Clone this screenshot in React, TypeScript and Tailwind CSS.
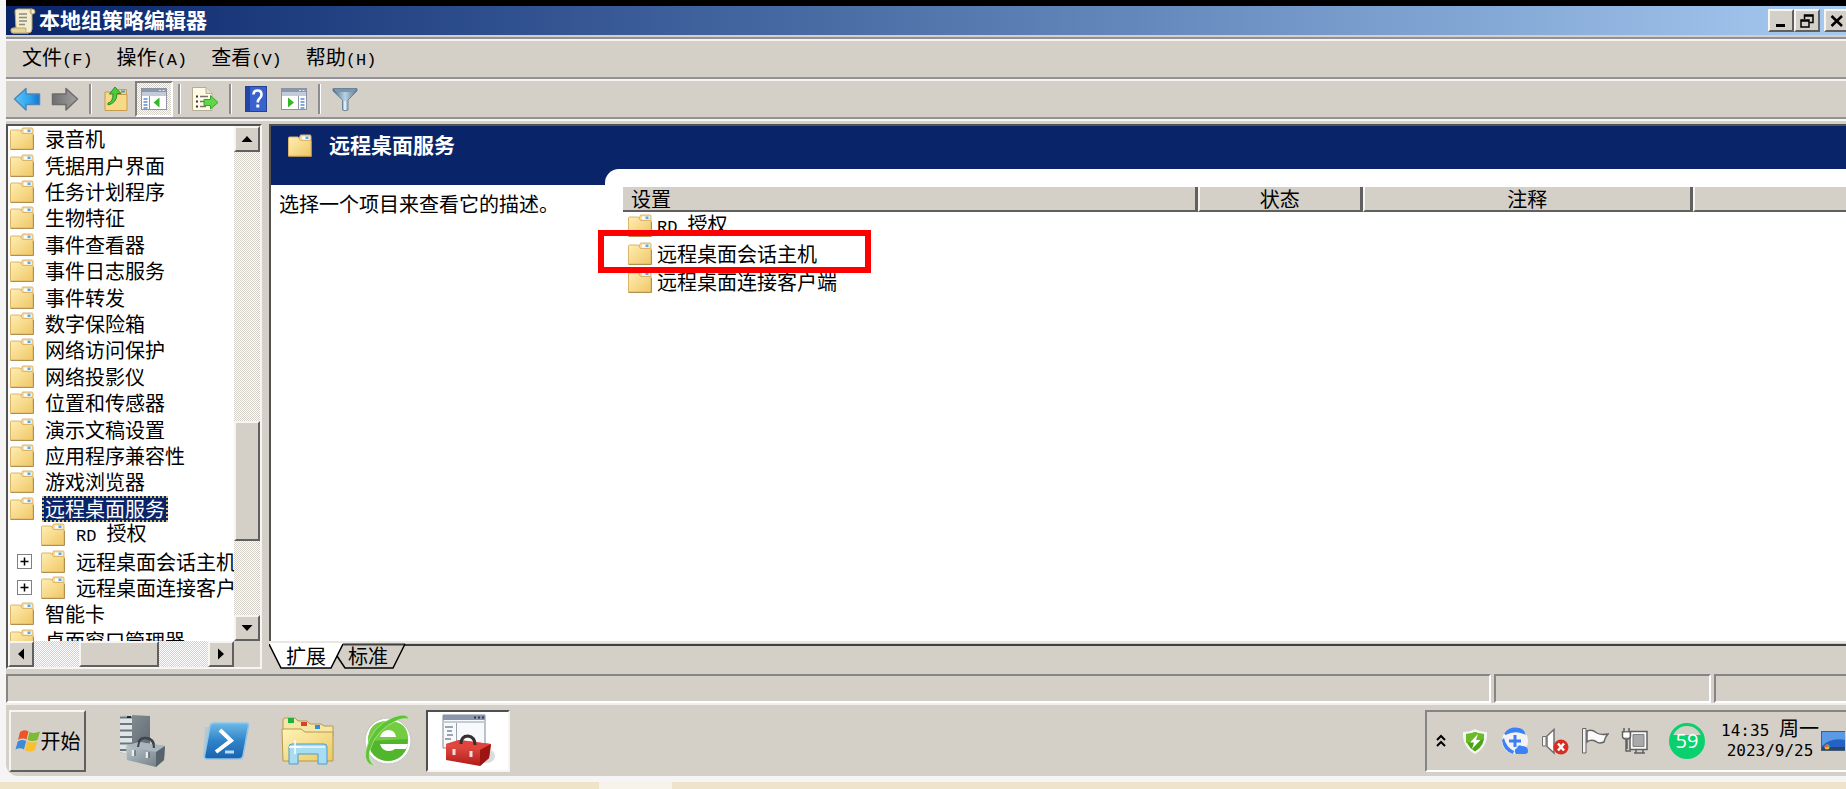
import type { ReactNode } from 'react'
import { clsx } from 'clsx'

const menus = [
  { name: '文件', key: '(F)' },
  { name: '操作', key: '(A)' },
  { name: '查看', key: '(V)' },
  { name: '帮助', key: '(H)' },
]

type TreeItem = { name: string; latin?: string; child?: boolean; expandable?: boolean; selected?: boolean }

const tree: TreeItem[] = [
  { name: '录音机' },
  { name: '凭据用户界面' },
  { name: '任务计划程序' },
  { name: '生物特征' },
  { name: '事件查看器' },
  { name: '事件日志服务' },
  { name: '事件转发' },
  { name: '数字保险箱' },
  { name: '网络访问保护' },
  { name: '网络投影仪' },
  { name: '位置和传感器' },
  { name: '演示文稿设置' },
  { name: '应用程序兼容性' },
  { name: '游戏浏览器' },
  { name: '远程桌面服务', selected: true },
  { name: '授权', latin: 'RD ', child: true },
  { name: '远程桌面会话主机', child: true, expandable: true },
  { name: '远程桌面连接客户端', child: true, expandable: true },
  { name: '智能卡' },
  { name: '桌面窗口管理器' },
]

const settings = [
  { name: '授权', latin: 'RD ' },
  { name: '远程桌面会话主机', marked: true },
  { name: '远程桌面连接客户端' },
]

const raised = 'bg-[#d4d0c8] border-2 border-t-[#f6f5f2] border-l-[#f6f5f2] border-r-[#606060] border-b-[#606060]'
const track = 'bg-[repeating-conic-gradient(#ffffff_0_25%,#d4d0c8_0_50%)] bg-[length:2px_2px]'

function Latin({ children }: { children: ReactNode }) {
  return <span className="font-['Liberation_Mono'] text-[17px] whitespace-pre">{children}</span>
}

function FolderIcon() {
  return (
    <svg viewBox="0 0 24 24" className="size-6 shrink-0" aria-hidden="true">
      <defs>
        <linearGradient id="folder" x1="0" y1="0" x2="1" y2="1">
          <stop offset="0" stopColor="#ffeeb4" />
          <stop offset="1" stopColor="#efc765" />
        </linearGradient>
      </defs>
      <path d="M11 4.5L12.5 1H22Q23 1 23 2.500V10H11Z" fill="#f6dc9c" stroke="#e0b56c" />
      <rect x="14" y="2.500" width="7.500" height="3" fill="#fff" />
      <rect x="17.500" y="2.500" width="3" height="2.500" fill="#55aaf0" />
      <path d="M.5 4Q.5 3 1.500 3H10L12.500 6.500H22.500Q23 6.500 23 7.500V22H.5Z" fill="url(#folder)" stroke="#dcb566" />
      <path d="M.5 22.500H23.500V8" fill="none" stroke="#b08f50" />
    </svg>
  )
}

function Arrow({ dir }: { dir: 'up' | 'down' | 'left' | 'right' }) {
  const paths = {
    up: 'M6 3L11.5 9H0.5Z',
    down: 'M6 9L11.5 3H0.5Z',
    left: 'M3 6L9 0.5V11.5Z',
    right: 'M9 6L3 0.5V11.5Z',
  }
  return (
    <svg viewBox="0 0 12 12" className="size-3" aria-hidden="true">
      <path d={paths[dir]} fill="#000" />
    </svg>
  )
}

function ScrollButton({ dir, label }: { dir: 'up' | 'down' | 'left' | 'right'; label: string }) {
  return (
    <button type="button" aria-label={label} className={clsx(raised, 'flex size-[26px] shrink-0 items-center justify-center')}>
      <Arrow dir={dir} />
    </button>
  )
}

function Groove() {
  return <div className="h-1 shrink-0 border-t-2 border-b-2 border-t-[#929196] border-b-[#f6f5f2]" />
}

function ToolButton({ label, pressed, children }: { label: string; pressed?: boolean; children: ReactNode }) {
  return (
    <button
      type="button"
      aria-label={label}
      className={clsx(
        'flex h-9 w-[38px] items-center justify-center',
        pressed && 'border-2 border-t-[#808080] border-l-[#808080] border-r-white border-b-white',
        pressed && track,
      )}
    >
      {children}
    </button>
  )
}

function ToolSeparator() {
  return (
    <div className="flex w-[13px] justify-center">
      <div className="h-[30px] w-[3px] border-l-2 border-r border-l-[#8d8d91] border-r-white" />
    </div>
  )
}

function ArrowToolIcon({ back }: { back?: boolean }) {
  return (
    <svg viewBox="0 0 28 26" className="h-[26px] w-7" aria-hidden="true">
      <defs>
        <linearGradient id="blueArrow" x1="0" y1="0" x2="1" y2="0">
          <stop offset="0" stopColor="#5cc6f8" />
          <stop offset=".6" stopColor="#2da4ee" />
          <stop offset="1" stopColor="#1673c8" />
        </linearGradient>
        <linearGradient id="grayArrow" x1="0" y1="0" x2="1" y2="0">
          <stop offset="0" stopColor="#6e6e6e" />
          <stop offset="1" stopColor="#a2a2a2" />
        </linearGradient>
      </defs>
      {back ? (
        <path d="M1.5 13L13 2.5V8H26.5V18.5H13V24Z" fill="url(#blueArrow)" stroke="#4b87bd" strokeWidth="1.5" strokeLinejoin="round" />
      ) : (
        <path d="M26.5 13L15 2.5V8H1.5V18.5H15V24Z" fill="url(#grayArrow)" stroke="#6c6c6c" strokeWidth="1.5" strokeLinejoin="round" />
      )}
    </svg>
  )
}

function FolderUpIcon() {
  return (
    <svg viewBox="0 0 24 26" className="h-[26px] w-6" aria-hidden="true">
      <path d="M13 6L14.5 3.5H22.5V12H13Z" fill="#f3d488" stroke="#c9a050" />
      <rect x="17" y="4.5" width="4" height="2" fill="#3a9be8" />
      <path d="M1 6H11L13 8.5H23V24.5H1Z" fill="#f7d988" stroke="#c69c4a" />
      <path d="M4 17Q9 16 9 8H5.5L11 1L17 7.5H13Q13 17 4 19Z" fill="#4ccb3b" stroke="#2d8f2a" />
    </svg>
  )
}

function PaneIcon({ flip }: { flip?: boolean }) {
  return (
    <svg viewBox="0 0 26 22" className="h-[22px] w-[26px]" aria-hidden="true">
      <rect x=".5" y=".5" width="25" height="21" fill="#fff" stroke="#8b93a5" />
      <rect x="1" y="1" width="24" height="3" fill="#8b97ad" />
      <path d="M18 2.5H20M21.5 2.5H23.5" stroke="#dfe5ee" />
      <rect x="1" y="4" width="24" height="4" fill="#c3cbd8" />
      {flip ? (
        <>
          <path d="M17.5 8V21" stroke="#8b93a5" />
          <path d="M19.5 11H23.5M19.5 14H23.5M19.5 17H23.5M19.5 20H23.5" stroke="#5b8ccc" strokeWidth="1.5" />
          <path d="M7 9.5L13 14.5L7 19.5Z" fill="#35b52c" />
        </>
      ) : (
        <>
          <path d="M8.5 8V21" stroke="#8b93a5" />
          <path d="M2.5 11H6.5M2.5 14H6.5M2.5 17H6.5M2.5 20H6.5" stroke="#5b8ccc" strokeWidth="1.5" />
          <path d="M18.5 9.5L12.5 14.5L18.5 19.5Z" fill="#35b52c" />
        </>
      )}
    </svg>
  )
}

function ExportIcon() {
  return (
    <svg viewBox="0 0 28 26" className="h-[26px] w-7" aria-hidden="true">
      <path d="M1.5 1.5H15L21 7.5V24.5H1.5Z" fill="#fdfae6" stroke="#b7ad92" />
      <path d="M15 1.5V7.5H21" fill="#e6dfc6" stroke="#b7ad92" />
      <path d="M5 10.5H7M5 15.5H7M5 20.5H7" stroke="#333" strokeWidth="2" />
      <path d="M9 10.5H17M9 15.5H14M9 20.5H15" stroke="#77736a" strokeWidth="1.5" />
      <path d="M13 13.5H19.5V9.5L27 16.5L19.5 23V19.5H13Z" fill="#5fd848" stroke="#39a52f" />
    </svg>
  )
}

function HelpIcon() {
  return (
    <svg viewBox="0 0 22 26" className="h-[26px] w-[22px]" aria-hidden="true">
      <rect x=".5" y=".5" width="21" height="25" fill="#3a62cf" stroke="#27408f" />
      <rect x="1" y="1" width="4" height="24" fill="#2545a4" />
      <path d="M8.5 8.5Q8.5 4.5 12.5 4.5Q16.5 4.5 16.5 8.5Q16.5 11 14.5 12.5Q12.8 13.8 12.8 16.5" fill="none" stroke="#fff" strokeWidth="2.6" />
      <rect x="11.3" y="18.5" width="3" height="3" fill="#fff" />
    </svg>
  )
}

function FilterIcon() {
  return (
    <svg viewBox="0 0 26 26" className="size-[26px]" aria-hidden="true">
      <defs>
        <linearGradient id="funnel" x1="0" y1="0" x2="1" y2="0">
          <stop offset="0" stopColor="#4f6b82" />
          <stop offset=".5" stopColor="#b9d3e4" />
          <stop offset="1" stopColor="#58758d" />
        </linearGradient>
      </defs>
      <path d="M1 2.5H25V5L16 14V24Q13 25.5 10.5 24V14L1 5Z" fill="url(#funnel)" stroke="#6b8498" />
      <path d="M2 3H24L22 6H4Z" fill="#7b97ab" />
      <path d="M13 15V24" stroke="#dcebf5" strokeWidth="2" />
    </svg>
  )
}

function ScrollIcon() {
  return (
    <svg viewBox="0 0 26 26" className="size-[26px]" aria-hidden="true">
      <path d="M5 3Q5 1 8 1H22Q25 1 25 4Q25 6 22 6V21Q22 25 18 25H3Q1 25 1 22Q1 20 4 20H6Z" fill="#f5eccb" stroke="#bba76c" />
      <path d="M22 6Q20 6 20 3.5Q20 1 22 1" fill="#d9c88e" stroke="#bba76c" />
      <path d="M4 20H16Q15 25 18 25H3Q1 25 1 22Q1 20 4 20Z" fill="#e4d49c" stroke="#bba76c" />
      <path d="M9 6H17M9 9.5H17M9 13H17M9 16.5H15" stroke="#8a8a86" strokeWidth="1.5" />
    </svg>
  )
}

function WindowsFlag() {
  return (
    <svg viewBox="0 0 26 24" className="h-6 w-[26px]" aria-hidden="true">
      <path d="M5 3Q9 0 13.5 2.5L11.5 10.5Q7 8.5 3 11Z" fill="#e8562a" />
      <path d="M14.5 3Q19 5 25 2.5L22.5 11Q17 13 12.5 11Z" fill="#7dbb35" />
      <path d="M2.7 12.5Q7 10 11.2 12L9 20.5Q5 18 .5 20.5Z" fill="#3f8ad8" />
      <path d="M12.2 12.5Q17 14.5 22 12.5L20 21Q15 24 10 21Z" fill="#f8c02c" />
    </svg>
  )
}

function ServerIcon() {
  return (
    <svg viewBox="0 0 46 54" className="h-[54px] w-[46px]" aria-hidden="true">
      <defs>
        <linearGradient id="tower" x1="0" y1="0" x2="1" y2="1">
          <stop offset="0" stopColor="#8b959b" />
          <stop offset="1" stopColor="#5c666d" />
        </linearGradient>
        <linearGradient id="steel" x1="0" y1="0" x2="1" y2="1">
          <stop offset="0" stopColor="#c2ccd2" />
          <stop offset="1" stopColor="#697780" />
        </linearGradient>
      </defs>
      <path d="M1 2L13 1L31 2V38L13 42L1 38Z" fill="url(#tower)" />
      <path d="M1 2L13 1V42L1 38Z" fill="#dfe4e6" />
      <path d="M1 3.5H13M1 10H13M1 16.5H13M1 23H13M1 29.5H13M1 36H13" stroke="#6c767c" strokeWidth="2" />
      <path d="M8 3H12" stroke="#1e2a30" strokeWidth="2" />
      <path d="M19 31Q20 23 27 24Q35 25 35 32" fill="none" stroke="#3c464c" strokeWidth="2.5" />
      <path d="M7 32L20 28L46 32L45 46L37 53L8 46Z" fill="url(#steel)" />
      <path d="M7 32L20 28L46 32L37 38Z" fill="#aab6bd" />
      <path d="M19 33Q20 23 27 24Q35 25 35 34" fill="none" stroke="#3c464c" strokeWidth="2" />
      <path d="M37 38L46 32L45 46L37 53Z" fill="#57646c" />
      <path d="M14 36V42M28 38V44" stroke="#e8edf0" strokeWidth="2.5" />
      <path d="M16 36V42M30 38V44" stroke="#47535a" />
    </svg>
  )
}

function PowerShellIcon() {
  return (
    <svg viewBox="0 0 50 40" className="h-10 w-[50px]" aria-hidden="true">
      <defs>
        <linearGradient id="ps" x1="0" y1="0" x2="0" y2="1">
          <stop offset="0" stopColor="#6db9e6" />
          <stop offset=".5" stopColor="#2f83c9" />
          <stop offset="1" stopColor="#1a62ad" />
        </linearGradient>
      </defs>
      <path d="M4 6H10L4 36H2Z" fill="#9fc4dc" opacity=".6" />
      <path d="M13 2H45Q48 2 47.5 5L42 35Q41.5 38 38 38H6Q3 38 3.5 35L9 5Q9.5 2 13 2Z" fill="url(#ps)" stroke="#8fc6ea" strokeWidth="1.5" />
      <path d="M19 9L30 19.5L15 31" fill="none" stroke="#fff" strokeWidth="4" />
      <path d="M24 31H33" stroke="#b8dcf4" strokeWidth="3" />
    </svg>
  )
}

function ExplorerIcon() {
  return (
    <svg viewBox="0 0 54 50" className="h-[50px] w-[54px]" aria-hidden="true">
      <defs>
        <linearGradient id="files" x1="0" y1="0" x2="1" y2="1">
          <stop offset="0" stopColor="#fff3b8" />
          <stop offset="1" stopColor="#ecc963" />
        </linearGradient>
      </defs>
      <path d="M2 12V4Q2 2 4 2H14L17 5H26L29 8H40L43 10H52V20H2Z" fill="#f5e6a6" stroke="#b59a4d" />
      <rect x="7" y="2" width="6" height="5" fill="#18b53a" />
      <rect x="20" y="6" width="6" height="4" fill="#d8412b" />
      <rect x="34" y="9" width="5" height="4" fill="#2e8de6" />
      <path d="M1 13H20L24 16H52V45H2Z" fill="url(#files)" stroke="#b59a4d" />
      <path d="M8 31Q8 28 11 28H43Q46 28 46 31V48H37V38H17V48H8Z" fill="#a7dcf3" stroke="#4c9cc8" />
      <path d="M10 31H44" stroke="#dff4fd" strokeWidth="2" />
      <path d="M14 24V38M8 31H20" stroke="#fff" strokeWidth="1.5" />
    </svg>
  )
}

function BrowserIcon() {
  return (
    <svg viewBox="0 0 52 54" className="h-[54px] w-[52px]" aria-hidden="true">
      <circle cx="26" cy="27" r="23" fill="#fff" stroke="#c4c4c0" />
      <circle cx="26" cy="27" r="20" fill="#52b62c" />
      <path d="M6 27Q6 7 26 7Q46 7 46 25Z" fill="#74cd40" />
      <path d="M18 23Q20 16 26.5 16Q33 16 34 23Z" fill="#fff" />
      <path d="M46 30H18Q20 37 26.5 37Q31 37 33 35H44" fill="#fff" />
      <path d="M13 52Q1 50 4 36Q9 12 32 3Q46 -2 47 6Q45 3 36 6Q14 15 8 36Q5 47 13 52Z" fill="#5ec433" stroke="#dff2d4" strokeWidth=".5" />
    </svg>
  )
}

function ToolboxIcon() {
  return (
    <svg viewBox="0 0 54 54" className="size-[54px]" aria-hidden="true">
      <defs>
        <linearGradient id="red" x1="0" y1="0" x2="0" y2="1">
          <stop offset="0" stopColor="#ec5a50" />
          <stop offset="1" stopColor="#b31a17" />
        </linearGradient>
      </defs>
      <path d="M2 1H44V34H2Z" fill="#f8f9fb" stroke="#7f889b" />
      <path d="M2 1H44V6H2Z" fill="#8c96aa" />
      <path d="M33 3.5H35M37 3.5H39M41 3.5H43" stroke="#303a50" strokeWidth="2" />
      <path d="M2 8H44" stroke="#c4cad6" strokeWidth="2" />
      <path d="M15.5 9V34" stroke="#9aa2b2" />
      <path d="M4 13H12M6 17H11M6 21H12M4 25H10" stroke="#7a869b" strokeWidth="1.5" />
      <ellipse cx="46" cy="42" rx="8" ry="7" fill="#dcdcdc" />
      <path d="M5 30L18 26L50 30L48 44L39 52L5 46Z" fill="url(#red)" />
      <path d="M5 30L18 26L50 30L39 36Z" fill="#e0443c" />
      <path d="M20 30Q20 22 27 22Q34 23 34 31" fill="none" stroke="#34302f" strokeWidth="3" />
      <path d="M39 36L50 30L48 44L39 52Z" fill="#9c1512" />
      <path d="M13 35V41M30 37V43" stroke="#f0dede" strokeWidth="3" />
    </svg>
  )
}

function CaptionButton({ label, children }: { label: string; children: ReactNode }) {
  return (
    <button type="button" aria-label={label} className={clsx(raised, 'flex h-[23px] w-[26px] items-center justify-center')}>
      <svg viewBox="0 0 14 14" className="size-3.5" aria-hidden="true">
        {children}
      </svg>
    </button>
  )
}

function TrayButton({ label, children }: { label: string; children: ReactNode }) {
  return (
    <button type="button" aria-label={label} className="flex w-10 shrink-0 items-center justify-center">
      <svg viewBox="0 0 28 28" className="size-7" aria-hidden="true">
        {children}
      </svg>
    </button>
  )
}

function TitleBar() {
  return (
    <header className="flex h-[29px] shrink-0 items-center bg-linear-to-r from-[#0a246a] to-[#a6caf0] pl-1">
      <ScrollIcon />
      <h1 className="ml-[3px] flex-1 pb-1 text-[21px] leading-6 font-bold text-white">本地组策略编辑器</h1>
      <div className="-mr-1 flex">
        <CaptionButton label="最小化">
          <path d="M2 11.5H11" stroke="#000" strokeWidth="3" />
        </CaptionButton>
        <CaptionButton label="还原">
          <path d="M4.5 5V1H13V8.5H9.5M4.5 2H13" fill="none" stroke="#000" strokeWidth="1.5" />
          <path d="M1 6H9V13H1ZM1 7H9" fill="none" stroke="#000" strokeWidth="1.5" />
        </CaptionButton>
        <div className="ml-1">
          <CaptionButton label="关闭">
            <path d="M1.5 2L12 12M12 2L1.5 12" stroke="#000" strokeWidth="2.5" />
          </CaptionButton>
        </div>
      </div>
    </header>
  )
}

function Toolbar() {
  return (
    <div className="flex h-9 shrink-0 items-center pl-0.5">
      <ToolButton label="后退"><ArrowToolIcon back /></ToolButton>
      <ToolButton label="前进"><ArrowToolIcon /></ToolButton>
      <ToolSeparator />
      <ToolButton label="上一级"><FolderUpIcon /></ToolButton>
      <ToolButton label="显示/隐藏控制台树" pressed><PaneIcon /></ToolButton>
      <ToolSeparator />
      <ToolButton label="导出列表"><ExportIcon /></ToolButton>
      <ToolSeparator />
      <ToolButton label="帮助"><HelpIcon /></ToolButton>
      <ToolButton label="显示/隐藏操作窗格"><PaneIcon flip /></ToolButton>
      <ToolSeparator />
      <ToolButton label="筛选器"><FilterIcon /></ToolButton>
    </div>
  )
}

function TreePane() {
  return (
    <aside className="flex w-[256px] shrink-0 flex-col border-2 border-t-[#55534f] border-l-[#55534f] border-r-[#f6f5f2] border-b-[#f6f5f2] bg-[#d4d0c8]">
      <div className="flex min-h-0 flex-1">
        <div className="min-w-0 flex-1 overflow-hidden bg-white">
          <ul className="grid h-[528px] auto-rows-fr">
            {tree.map((item) => (
              <li key={item.name} className={clsx('flex min-h-0 items-center', item.child ? 'pl-[9px]' : 'pl-0.5')}>
                {item.child && (
                  <span className="mr-[9px] flex w-[15px] shrink-0">
                    {item.expandable && (
                      <button type="button" aria-label="展开" className="size-[15px] border border-[#808080] bg-white">
                        <svg viewBox="0 0 13 13" className="size-[13px]" aria-hidden="true">
                          <path d="M6.5 2.5V10.5M2.5 6.5H10.5" stroke="#000" strokeWidth="1.5" />
                        </svg>
                      </button>
                    )}
                  </span>
                )}
                <FolderIcon />
                <span
                  className={clsx(
                    'ml-2 px-[3px] leading-6 whitespace-nowrap',
                    item.selected && 'bg-[#0a246a] py-px text-white outline-2 -outline-offset-2 outline-dotted outline-[#d8c070]',
                  )}
                >
                  {item.latin && <Latin>{item.latin}</Latin>}
                  {item.name}
                </span>
              </li>
            ))}
          </ul>
        </div>
        <div className={clsx(track, 'flex w-[26px] shrink-0 flex-col')}>
          <ScrollButton dir="up" label="向上滚动" />
          <div className="flex-[270]" />
          <div className={clsx(raised, 'flex-[117]')} />
          <div className="flex-[74]" />
          <ScrollButton dir="down" label="向下滚动" />
        </div>
      </div>
      <div className="flex shrink-0">
        <div className={clsx(track, 'flex flex-1')}>
          <ScrollButton dir="left" label="向左滚动" />
          <div className="flex-[46]" />
          <div className={clsx(raised, 'flex-[76]')} />
          <div className="flex-[50]" />
          <ScrollButton dir="right" label="向右滚动" />
        </div>
        <div className="w-[26px]" />
      </div>
    </aside>
  )
}

function SettingsTable() {
  const head = 'h-[25px] border-b-2 border-b-[#606060] bg-[#d4d0c8] p-0 font-normal leading-[22px]'
  const divided = 'border-r-3 border-r-[#606060]'
  const lit = 'border-l-2 border-l-[#f6f5f2]'
  return (
    <table className="w-full table-fixed border-separate border-spacing-0">
      <colgroup>
        <col className="w-[47%]" />
        <col className="w-[165px]" />
        <col className="w-[330px]" />
        <col />
      </colgroup>
      <thead>
        <tr>
          <th className={clsx(head, divided, 'pl-2 text-left')}>设置</th>
          <th className={clsx(head, divided, lit)}>状态</th>
          <th className={clsx(head, divided, lit)}>注释</th>
          <th className={clsx(head, lit)} aria-label="路径" />
        </tr>
      </thead>
      <tbody>
        {settings.map((row) => (
          <tr key={row.name}>
            <td className="relative h-7 p-0" colSpan={4}>
              <div className="flex h-7 items-center gap-[5px] pl-[5px]">
                <FolderIcon />
                <span className="leading-6">
                  {row.latin && <Latin>{row.latin}</Latin>}
                  {row.name}
                </span>
              </div>
              {row.marked && (
                <div className="absolute -top-2.5 -left-[25px] z-10 h-[43px] w-[273px] border-6 border-[#fe0000]" />
              )}
            </td>
          </tr>
        ))}
      </tbody>
    </table>
  )
}

function Tabs() {
  return (
    <div className="flex h-7 shrink-0 border-t-2 border-t-[#e9e7e2]">
      <button type="button" className="relative flex w-[74px] justify-center leading-[26px]">
        <svg viewBox="0 0 74 26" className="absolute inset-0 h-[26px] w-[74px]" aria-hidden="true">
          <path d="M0 0H74L62 25H12Z" fill="#fff" />
          <path d="M0 1L12 25H62L74 1" fill="none" stroke="#000" strokeWidth="1.5" />
        </svg>
        <span className="relative">扩展</span>
      </button>
      <button type="button" className="relative flex w-[62px] items-center pl-[5px] leading-[26px]">
        <svg viewBox="0 0 62 26" className="absolute inset-0 h-[26px] w-[62px] overflow-visible" aria-hidden="true">
          <path d="M0 1.5H62" stroke="#404040" strokeWidth="2" />
          <path d="M-6 13L2 25H50L62 1" fill="none" stroke="#000" strokeWidth="1.5" />
        </svg>
        <span className="relative">标准</span>
      </button>
      <div className="mt-px h-0.5 flex-1 bg-[#404040]" />
    </div>
  )
}

function DetailPane() {
  return (
    <main className="flex min-w-0 flex-1 flex-col">
      <div className="flex min-h-0 flex-1 border-t-2 border-l-2 border-t-[#55534f] border-l-[#55534f] bg-white">
        <section className="w-[334px] shrink-0">
          <div className="flex h-[59px] items-start bg-[#0a246a] pt-2 pl-[17px]">
            <FolderIcon />
            <h2 className="ml-[17px] text-[21px] leading-5 font-bold text-white">远程桌面服务</h2>
          </div>
          <p className="px-2 py-1.5 leading-[26px] whitespace-nowrap">选择一个项目来查看它的描述。</p>
        </section>
        <section className="min-w-0 flex-1 bg-[#0a246a] pt-[43px]">
          <div className="h-full rounded-tl-[14px] bg-white pt-[18px] pl-[18px]">
            <SettingsTable />
          </div>
        </section>
      </div>
      <Tabs />
    </main>
  )
}

function StatusBar() {
  const cell = 'border-2 border-t-[#858585] border-l-[#858585] border-r-white border-b-white'
  return (
    <footer className="flex h-[29px] shrink-0 gap-[3px]">
      <div className={clsx(cell, 'flex-1')} />
      <div className={clsx(cell, 'w-[217px]')} />
      <div className={clsx(cell, 'w-[132px] border-r-0')} />
    </footer>
  )
}

function Taskbar() {
  return (
    <nav className="flex h-[73px] shrink-0 overflow-hidden rounded-bl-xl border-t-2 border-t-[#f0eeea] bg-[#d4d0c8] pt-[5px] pb-1">
      <button type="button" className={clsx(raised, 'ml-[3px] flex w-[77px] shrink-0 items-center justify-center')}>
        <WindowsFlag />
        开始
      </button>
      <div className="ml-3 flex flex-1">
        <button type="button" aria-label="服务器管理器" className="flex w-[88px] items-center justify-center"><ServerIcon /></button>
        <button type="button" aria-label="PowerShell" className="flex w-20 items-center justify-center"><PowerShellIcon /></button>
        <button type="button" aria-label="资源管理器" className="flex w-[84px] items-center justify-center"><ExplorerIcon /></button>
        <button type="button" aria-label="浏览器" className="flex w-[76px] items-center justify-center"><BrowserIcon /></button>
        <button
          type="button"
          aria-label="本地组策略编辑器"
          className="flex w-[84px] items-center justify-center border-2 border-t-[#505050] border-l-[#505050] border-r-[#f6f5f2] border-b-[#f6f5f2] bg-white"
        >
          <ToolboxIcon />
        </button>
      </div>
      <div className="flex w-[421px] shrink-0 border-t-2 border-b-2 border-l-2 border-t-[#858585] border-b-white border-l-[#858585]">
        <button type="button" aria-label="显示隐藏的图标" className="flex w-7 shrink-0 items-center justify-center">
          <svg viewBox="0 0 10 14" className="h-3.5 w-2.5" aria-hidden="true">
            <path d="M1 6L5 2L9 6M1 12L5 8L9 12" fill="none" stroke="#000" strokeWidth="2" />
          </svg>
        </button>
        <TrayButton label="安全卫士">
          <path d="M14 2Q19 5 26 5Q27 20 14 27Q1 20 2 5Q9 5 14 2Z" fill="#f4f6f2" />
          <path d="M14 5Q18 7 23 7Q24 19 14 24.5Q4 19 5 7Q10 7 14 5Z" fill="#4ba412" />
          <path d="M14 5Q18 7 23 7L23 12L5 16L5 7Q10 7 14 5Z" fill="#6bbb28" />
          <path d="M17 7L9 15.5H13L11 22L19.5 13H15Z" fill="#fff" />
        </TrayButton>
        <TrayButton label="云助手">
          <circle cx="14" cy="14" r="13" fill="#fff" opacity=".75" />
          <path d="M4 7Q9 0 18 2Q22 3 23 6Q14 2 4 7Z" fill="#3b82f6" stroke="#3b82f6" strokeWidth="2" />
          <path d="M1 13Q2 24 12 27L13 24Q5 20 3 11Z" fill="#3b82f6" />
          <path d="M15 27Q12 23 16 21Q17 17 21 19Q27 19 27 24Q27 27 24 27Z" fill="#3b82f6" />
          <path d="M14 8V20M8 14H20" stroke="#3b7ff0" strokeWidth="3" />
        </TrayButton>
        <TrayButton label="音量">
          <path d="M1.5 9.5H5V19H1.5Z" fill="#f4f4f4" stroke="#707070" />
          <path d="M6 9L13 2.5V26L6 19.5Z" fill="#fff" stroke="#707070" strokeWidth="1.5" />
          <circle cx="20" cy="20" r="7.5" fill="#d92c22" />
          <path d="M17 16.5L23 23.5M23 16.5L17 23.5" stroke="#fff" strokeWidth="2.5" />
        </TrayButton>
        <TrayButton label="操作中心">
          <path d="M1.5 1.5H5V26H1.5Z" fill="#f2f2f2" stroke="#666" />
          <path d="M6 4Q11 2 15 5.5Q19 8.5 27 7Q24 10 23 15Q18 17 15 14.5Q10 12 6 15Z" fill="#fafafa" stroke="#666" strokeWidth="1.5" />
        </TrayButton>
        <TrayButton label="网络">
          <path d="M9 4.5H26V22.5H9Z" fill="#fafafa" stroke="#606060" strokeWidth="1.5" />
          <path d="M12 7.5H23V19.5H12Z" fill="#a9a9a9" stroke="#808080" />
          <path d="M13 26H24M15 22.5V26M22 22.5V26" stroke="#606060" strokeWidth="1.5" />
          <path d="M1.5 4V9Q1.5 12 5 12V24H10M9.5 4V9Q9.5 12 6 12V22M3 1V5M8 1V5M1 5H10" fill="none" stroke="#606060" strokeWidth="1.5" />
          <path d="M2.5 5.5H8.5V10H2.5Z" fill="#fff" />
        </TrayButton>
        <div className="flex w-16 shrink-0 items-center justify-center">
          <div className="flex size-9 items-center justify-center rounded-full border-3 border-[#0ad06e] bg-linear-to-b from-[#d4d0c8] from-30% to-[#0ad06e] to-30% font-['Open_Sans'] text-[20px] leading-6 text-white">
            59
          </div>
        </div>
        <time className="flex w-[102px] shrink-0 flex-col items-center justify-start pt-1.5 leading-5 whitespace-nowrap">
          <span>
            <span className="font-['DejaVu_Sans_Mono'] text-[16px] whitespace-pre">14:35 </span>周一
          </span>
          <span className="font-['DejaVu_Sans_Mono'] text-[16px]">2023/9/25</span>
        </time>
        <button type="button" aria-label="显示桌面" className="flex flex-1 items-center overflow-hidden">
          <svg viewBox="0 0 24 20" className="h-5 w-6 shrink-0" aria-hidden="true">
            <rect x=".5" y=".5" width="26" height="19" fill="#2463c4" stroke="#4a5d78" />
            <path d="M1 1H24V9Q10 6 1 15Z" fill="#5c9ae6" />
            <rect x="1" y="16" width="24" height="3" fill="#27476f" />
            <circle cx="6" cy="16" r="2.5" fill="#f0b429" />
            <path d="M6 13.5A2.5 2.5 0 0 1 8.5 16H6Z" fill="#62b446" />
            <path d="M3.5 16A2.5 2.5 0 0 1 6 13.5V16Z" fill="#e8562a" />
          </svg>
        </button>
      </div>
    </nav>
  )
}

export default function App() {
  return (
    <div className="flex h-screen flex-col overflow-hidden bg-[#f5f5f5] font-['Noto_Sans_CJK_SC',sans-serif] text-[20px] text-black">
      <div className="flex min-h-0 flex-1 flex-col pl-1.5">
        <div className="h-1.5 shrink-0 bg-black" />
        <TitleBar />
        <div className="flex min-h-0 flex-1 flex-col bg-[#d4d0c8]">
          <div className="h-0.5 shrink-0" />
          <Groove />
          <div className="flex h-9 shrink-0 items-center gap-6 pl-4">
            {menus.map((menu) => (
              <button key={menu.name} type="button" className="leading-7">
                {menu.name}
                <Latin>{menu.key}</Latin>
              </button>
            ))}
          </div>
          <Groove />
          <Toolbar />
          <Groove />
          <div className="flex min-h-0 flex-1 gap-[7px] pt-[3px] pb-[5px]">
            <TreePane />
            <DetailPane />
          </div>
          <StatusBar />
        </div>
        <Taskbar />
      </div>
      <div className="mt-1.5 flex h-[7px] shrink-0 bg-[#efe3cb]">
        <div className="w-[599px] bg-[#f0e4c8]" />
        <div className="w-[73px] bg-[#f7f2ea]" />
      </div>
    </div>
  )
}
